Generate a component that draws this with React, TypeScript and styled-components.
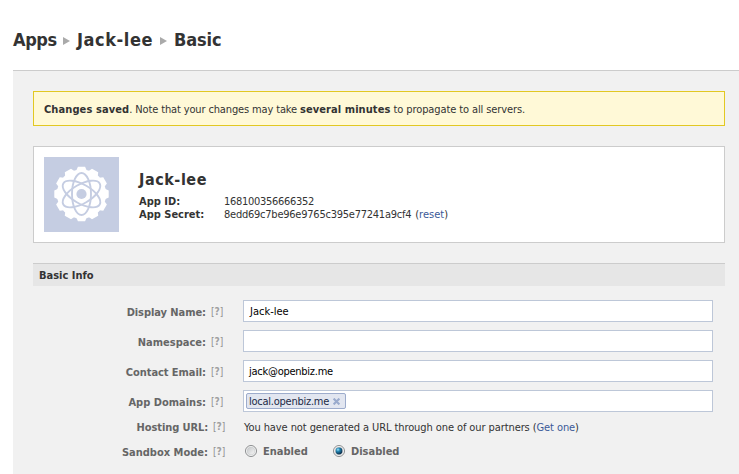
import React from "react";
import styled, { createGlobalStyle } from "styled-components";

const GlobalStyle = createGlobalStyle`
  body {
    margin: 0;
    background: #fff;
    color: #333;
    font: 11px/13px "DejaVu Sans Condensed", "DejaVu Sans", sans-serif;
    overflow: hidden;
  }
  *, *::before, *::after { box-sizing: border-box; }
`;

const Page = styled.div`
  height: 474px;
  padding-left: 13px;
  display: flex;
  flex-direction: column;
`;

const Breadcrumbs = styled.nav`
  height: 70px;
  padding-top: 28px;
  display: flex;
  font-size: 18px;
  font-weight: 700;
  line-height: 24px;
  white-space: nowrap;
`;

const Crumb = styled.span<{ $width: number; $track: number }>`
  width: ${(p) => p.$width}px;
  letter-spacing: ${(p) => p.$track}px;
`;

const CrumbArrow = styled.svg`
  width: 7px;
  height: 8px;
  margin: 9px 7px 0 6px;
  flex: none;
  fill: #aaa;
`;

const Panel = styled.main`
  flex: 1;
  padding: 20px 14px 0 20px;
  border-top: 1px solid #ccc;
  background: #f1f1f1;
`;

const Notice = styled.div`
  height: 35px;
  padding: 11px 10px 0;
  border: 1px solid #e2c822;
  background: #fff9d7;
  white-space: pre;
`;

const Text = styled.span<{ $track?: number }>`
  letter-spacing: ${(p) => p.$track ?? 0}px;
`;

const Strong = styled.strong<{ $track?: number }>`
  letter-spacing: ${(p) => p.$track ?? 0}px;
`;

const AppCard = styled.section`
  height: 97px;
  margin-top: 20px;
  padding: 10px;
  display: flex;
  gap: 20px;
  border: 1px solid #ccc;
  background: #fff;
`;

const AppIcon = styled.svg`
  width: 75px;
  height: 75px;
  flex: none;
  background: #c5cde2;
`;

const AppTitle = styled.h2`
  margin: 13px 0 5px;
  font-size: 16px;
  line-height: 20px;
  letter-spacing: 0.55px;
`;

const Details = styled.dl`
  margin: 0;
  display: grid;
  grid-template-columns: 85px auto;
  grid-auto-rows: 13px;
  white-space: nowrap;
`;

const Term = styled.dt`
  font-weight: 700;
`;

const Value = styled.dd<{ $track: number }>`
  margin: 0;
  letter-spacing: ${(p) => p.$track}px;
`;

const ResetAction = styled.span`
  margin-left: 1px;
  letter-spacing: 0;
`;

const Link = styled.a`
  color: #3b5998;
  text-decoration: none;
`;

const SectionHeader = styled.h3`
  height: 23px;
  margin: 20px 0 14px;
  padding: 5px 6px 0;
  border-top: 1px solid #ccc;
  background: #e6e6e6;
  font-size: 11px;
  line-height: 13px;
`;

const FieldRow = styled.div<{ $compact?: boolean }>`
  display: grid;
  grid-template-columns: ${(p) => (p.$compact ? "192px 1fr" : "190px 470px")};
  column-gap: ${(p) => (p.$compact ? 19 : 20)}px;
  height: ${(p) => (p.$compact ? 25 : 30)}px;
`;

const Label = styled.div<{ $compact?: boolean }>`
  padding-top: ${(p) => (p.$compact ? 1 : 6)}px;
  display: flex;
  justify-content: flex-end;
  gap: 5px;
  color: #666;
  font-weight: 700;
  white-space: nowrap;
`;

const Help = styled.span`
  width: 12px;
  display: flex;
  justify-content: space-between;
  color: #909090;
  font-size: 10px;
  font-weight: 400;
  line-height: 12px;
`;

const Question = styled.b`
  color: #a0a0a0;
`;

const Field = styled.div<{ $track?: number; $indent?: number; $tagged?: boolean }>`
  height: 22px;
  padding: ${(p) => (p.$tagged ? "2px" : `4px ${p.$indent ?? 5}px`)};
  border: 1px solid #bdc7d8;
  background: #fff;
  color: #000;
  letter-spacing: ${(p) => p.$track ?? 0}px;
`;

const Tag = styled.span`
  width: 100px;
  height: 16px;
  padding: 0 5px 0 2px;
  display: flex;
  align-items: center;
  justify-content: space-between;
  border: 1px solid #9daccc;
  border-radius: 2px;
  background: #e2e6f0;
  color: #1c2a47;
  line-height: 13px;
  letter-spacing: -0.25px;
`;

const RemoveIcon = styled.svg`
  width: 7px;
  height: 7px;
  fill: none;
  stroke: #9aabcd;
  stroke-width: 2.1;
`;

const Hint = styled.div`
  padding-top: 1px;
  letter-spacing: -0.09px;
  white-space: nowrap;
`;

const RadioGroup = styled.div`
  padding-left: 1px;
  display: flex;
  color: #666;
  font-weight: 700;
`;

const RadioOption = styled.span`
  width: 88px;
  display: flex;
  gap: 6px;
`;

const RadioDial = styled.svg`
  width: 12px;
  height: 12px;
  flex: none;
`;

const Arrow = () => (
  <CrumbArrow viewBox="0 0 7 8">
    <path d="M0 0 7 4 0 8Z" />
  </CrumbArrow>
);

const teeth = Array.from({ length: 12 }, (_, i) => i * 30);

const AtomGear = () => (
  <AppIcon viewBox="0 0 75 75">
    <g transform="translate(37.5 37)">
      <circle r="24.6" fill="#fff" />
      {teeth.map((angle) => (
        <path key={angle} d="M-5.2-23.5 -3.6-27.2H3.6L5.2-23.5Z" fill="#fff" transform={`rotate(${angle})`} />
      ))}
      <g fill="none" stroke="#c5cde2" strokeWidth="1.9">
        <ellipse rx="9.5" ry="21" />
        <ellipse rx="9.5" ry="21" transform="rotate(60)" />
        <ellipse rx="9.5" ry="21" transform="rotate(-60)" />
      </g>
      <circle r="5.1" fill="#c5cde2" />
    </g>
  </AppIcon>
);

const HelpMark = () => (
  <Help>
    <span>[</span>
    <Question>?</Question>
    <span>]</span>
  </Help>
);

const FieldLabel = ({ text, track = 0, compact }: { text: string; track?: number; compact?: boolean }) => (
  <Label $compact={compact}>
    <Text $track={track}>{text}</Text>
    <HelpMark />
  </Label>
);

const Radio = ({ checked }: { checked?: boolean }) => (
  <RadioDial viewBox="0 0 12 12">
    <defs>
      <linearGradient id="dial" x1="0" y1="0" x2="1" y2="1">
        <stop offset="0" stopColor="#c4c6c8" />
        <stop offset="1" stopColor="#f8f8f8" />
      </linearGradient>
      <radialGradient id="dot" cx=".35" cy=".3" r=".7">
        <stop offset="0" stopColor="#9be4fb" />
        <stop offset=".4" stopColor="#2183b0" />
        <stop offset="1" stopColor="#0b2c49" />
      </radialGradient>
    </defs>
    <circle cx="6" cy="6" r="5.5" fill="#fafafa" stroke="#8a8c8e" />
    <circle cx="6" cy="6" r="3.9" fill="url(#dial)" stroke="#c5c8ca" strokeWidth=".6" />
    {checked && <circle cx="6" cy="6" r="3.4" fill="url(#dot)" />}
  </RadioDial>
);

export default function App() {
  return (
    <>
      <GlobalStyle />
      <Page>
        <Breadcrumbs>
          <Crumb $width={44} $track={-0.4}>Apps</Crumb>
          <Arrow />
          <Crumb $width={77} $track={0.55}>Jack-lee</Crumb>
          <Arrow />
          <Crumb $width={50} $track={-0.1}>Basic</Crumb>
        </Breadcrumbs>
        <Panel>
          <Notice>
            <Strong $track={0.1}>Changes saved</Strong>
            <Text $track={-0.14}>. Note that your changes may take </Text>
            <Strong $track={0.08}>several minutes</Strong>
            <Text $track={-0.1}> to propagate to all servers.</Text>
          </Notice>
          <AppCard>
            <AtomGear />
            <div>
              <AppTitle>Jack-lee</AppTitle>
              <Details>
                <Term>App ID:</Term>
                <Value $track={-0.29}>168100356666352</Value>
                <Term>App Secret:</Term>
                <Value $track={-0.24}>
                  8edd69c7be96e9765c395e77241a9cf4{" "}
                  <ResetAction>
                    (<Link>reset</Link>)
                  </ResetAction>
                </Value>
              </Details>
            </div>
          </AppCard>
          <SectionHeader>Basic Info</SectionHeader>
          <FieldRow>
            <FieldLabel text="Display Name:" track={-0.06} />
            <Field $indent={6}>Jack-lee</Field>
          </FieldRow>
          <FieldRow>
            <FieldLabel text="Namespace:" />
            <Field />
          </FieldRow>
          <FieldRow>
            <FieldLabel text="Contact Email:" track={-0.06} />
            <Field $track={-0.25}>jack@openbiz.me</Field>
          </FieldRow>
          <FieldRow>
            <FieldLabel text="App Domains:" />
            <Field $tagged>
              <Tag>
                local.openbiz.me
                <RemoveIcon viewBox="0 0 7 7">
                  <path d="M.6.6 6.4 6.4M6.4.6.6 6.4" />
                </RemoveIcon>
              </Tag>
            </Field>
          </FieldRow>
          <FieldRow $compact>
            <FieldLabel text="Hosting URL:" track={-0.1} compact />
            <Hint>
              You have not generated a URL through one of our partners (<Link>Get one</Link>)
            </Hint>
          </FieldRow>
          <FieldRow $compact>
            <FieldLabel text="Sandbox Mode:" compact />
            <RadioGroup>
              <RadioOption>
                <Radio />
                Enabled
              </RadioOption>
              <RadioOption>
                <Radio checked />
                Disabled
              </RadioOption>
            </RadioGroup>
          </FieldRow>
        </Panel>
      </Page>
    </>
  );
}
